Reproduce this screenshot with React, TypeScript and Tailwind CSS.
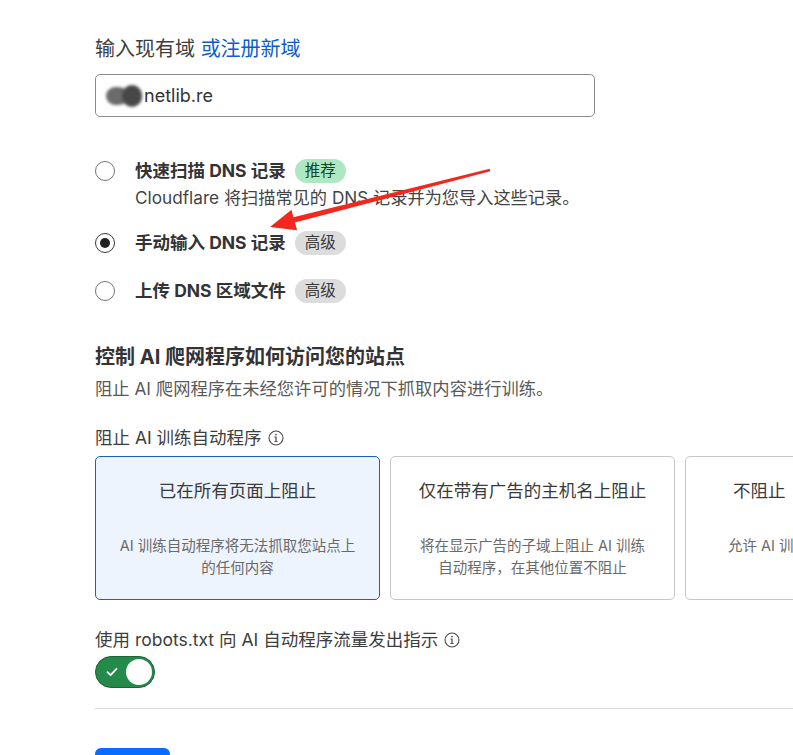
import React from "react";

function InfoIcon() {
  return (
    <svg width="16" height="16" viewBox="0 0 16 16" className="inline-block ml-[6px] -mt-[2px] align-middle" fill="none">
      <circle cx="8" cy="8" r="7" stroke="#4a4a4a" strokeWidth="1.1" />
      <rect x="7.4" y="6.6" width="1.2" height="5" fill="#4a4a4a" />
      <rect x="6.4" y="11" width="3.2" height="0.9" fill="#4a4a4a" />
      <rect x="6.4" y="6.6" width="1.6" height="0.9" fill="#4a4a4a" />
      <circle cx="8" cy="4.6" r="0.85" fill="#4a4a4a" />
    </svg>
  );
}

function Radio({ checked }: { checked?: boolean }) {
  return (
    <span
      className={
        "flex h-[20px] w-[20px] shrink-0 items-center justify-center rounded-full bg-white " +
        (checked ? "border-[1.5px] border-[#3a3a3a]" : "border border-[#767676]")
      }
    >
      {checked && <span className="h-[10px] w-[10px] rounded-full bg-[#222]" />}
    </span>
  );
}

function Badge({ tone, children }: { tone: "green" | "gray"; children: React.ReactNode }) {
  return (
    <span
      className={
        "ml-[9px] inline-flex h-[24px] items-center rounded-full px-[10px] text-[15.5px] " +
        (tone === "green" ? "bg-[#ade8c2] text-[#17452a]" : "bg-[#dcdcdc] text-[#3a3a3a]")
      }
    >
      {children}
    </span>
  );
}

export default function App() {
  return (
    <div
      className="relative h-[755px] w-[793px] overflow-hidden bg-white text-[#333]"
      style={{ fontFamily: 'Inter, "Noto Sans CJK SC", sans-serif' }}
    >
      <div className="flex flex-col pl-[95px] pt-[35px]">
        {/* domain */}
        <div className="text-[20px] leading-[28px] text-[#3d3d3d]">
          输入现有域 <span className="text-[#0a5ccf]">或注册新域</span>
        </div>
        <div className="mt-[11px] flex h-[43px] w-[500px] items-center rounded-[5px] border border-[#8c8c8c] pl-[10px] text-[18px]">
          <span className="relative mr-[1px] flex h-[20px] w-[37px] items-center">
            <span className="h-[18px] w-[22px] rounded-full bg-[#6b6b6b] blur-[1.5px]" />
            <span className="-ml-[6px] h-[22px] w-[20px] rounded-full bg-[#474747] blur-[1.5px]" />
          </span>
          <span className="text-[#333]">netlib.re</span>
        </div>

        {/* import options */}
        <div className="mt-[40px] flex h-[28px] items-center">
          <Radio />
          <span className="ml-[20px] text-[17.5px] font-bold text-[#333]">快速扫描 DNS 记录</span>
          <Badge tone="green">推荐</Badge>
        </div>
        <div className="pl-[40px] text-[17.2px] leading-[26px] text-[#444]">
          Cloudflare 将扫描常见的 DNS 记录并为您导入这些记录。
        </div>
        <div className="mt-[18px] flex h-[28px] items-center">
          <Radio checked />
          <span className="ml-[20px] text-[17.5px] font-bold text-[#333]">手动输入 DNS 记录</span>
          <Badge tone="gray">高级</Badge>
        </div>
        <div className="mt-[20px] flex h-[28px] items-center">
          <Radio />
          <span className="ml-[20px] text-[17.5px] font-bold text-[#333]">上传 DNS 区域文件</span>
          <Badge tone="gray">高级</Badge>
        </div>

        {/* AI crawlers */}
        <div className="mt-[38px] text-[20px] font-bold leading-[28px] text-[#333]">控制 AI 爬网程序如何访问您的站点</div>
        <div className="mt-[5px] text-[17.3px] leading-[26px] text-[#5a5a5a]">
          阻止 AI 爬网程序在未经您许可的情况下抓取内容进行训练。
        </div>
        <div className="mt-[23px] text-[17.5px] leading-[26px] text-[#3d3d3d]">
          阻止 AI 训练自动程序
          <InfoIcon />
        </div>

        <div className="mt-[5px] flex gap-[10px]">
          <div className="h-[144px] w-[285px] shrink-0 rounded-[5px] border border-[#1f5fbf] bg-[#edf4fe] pt-[20px] text-center">
            <div className="text-[17.5px] leading-[28px] text-[#3a3a3a]">已在所有页面上阻止</div>
            <div className="mt-[30px] text-[14.5px] leading-[22px] text-[#6a6a6a]">
              AI 训练自动程序将无法抓取您站点上
              <br />
              的任何内容
            </div>
          </div>
          <div className="h-[144px] w-[285px] shrink-0 rounded-[5px] border border-[#c6c6c6] pt-[20px] text-center">
            <div className="text-[17.5px] leading-[28px] text-[#3a3a3a]">仅在带有广告的主机名上阻止</div>
            <div className="mt-[30px] text-[14.5px] leading-[22px] text-[#6a6a6a]">
              将在显示广告的子域上阻止 AI 训练
              <br />
              自动程序，在其他位置不阻止
            </div>
          </div>
          <div className="h-[144px] w-[285px] shrink-0 whitespace-nowrap rounded-[5px] border border-[#c6c6c6] pt-[20px]">
            <div className="pl-[47px] text-[17.5px] leading-[28px] text-[#3a3a3a]">不阻止</div>
            <div className="mt-[30px] pl-[42px] text-[14.5px] leading-[22px] text-[#6a6a6a]">
              允许 AI 训练自动程序抓取您的站点
            </div>
          </div>
        </div>

        <div className="mt-[27px] text-[17.5px] leading-[26px] text-[#3d3d3d]">
          使用 robots.txt 向 AI 自动程序流量发出指示
          <InfoIcon />
        </div>
        <div className="mt-[3px] flex h-[32px] w-[60px] items-center justify-between rounded-full border border-[#1a6436] bg-[#238a4a] pl-[9px] pr-[2px]">
          <svg width="14" height="14" viewBox="0 0 14 14" fill="none">
            <path d="M2.5 7.2 L5.6 10.2 L11.5 3.8" stroke="white" strokeWidth="1.8" strokeLinecap="round" strokeLinejoin="round" />
          </svg>
          <span className="h-[26px] w-[26px] rounded-full bg-white" />
        </div>

        <div className="mt-[20px] h-px w-[760px] bg-[#d9d9d9]" />

        <div className="mt-[39px] h-[40px] w-[75px] rounded-[6px] bg-[#0a6cff]" />
      </div>

      {/* annotation arrow */}
      <svg className="pointer-events-none absolute left-0 top-0" width="793" height="755">
        <polygon
          points="270,227 291.5,209.8 293.4,217.2 489.7,168.8 490.3,171.2 294.8,222.4 297.2,230.2"
          fill="#f2271d"
        />
      </svg>
    </div>
  );
}
